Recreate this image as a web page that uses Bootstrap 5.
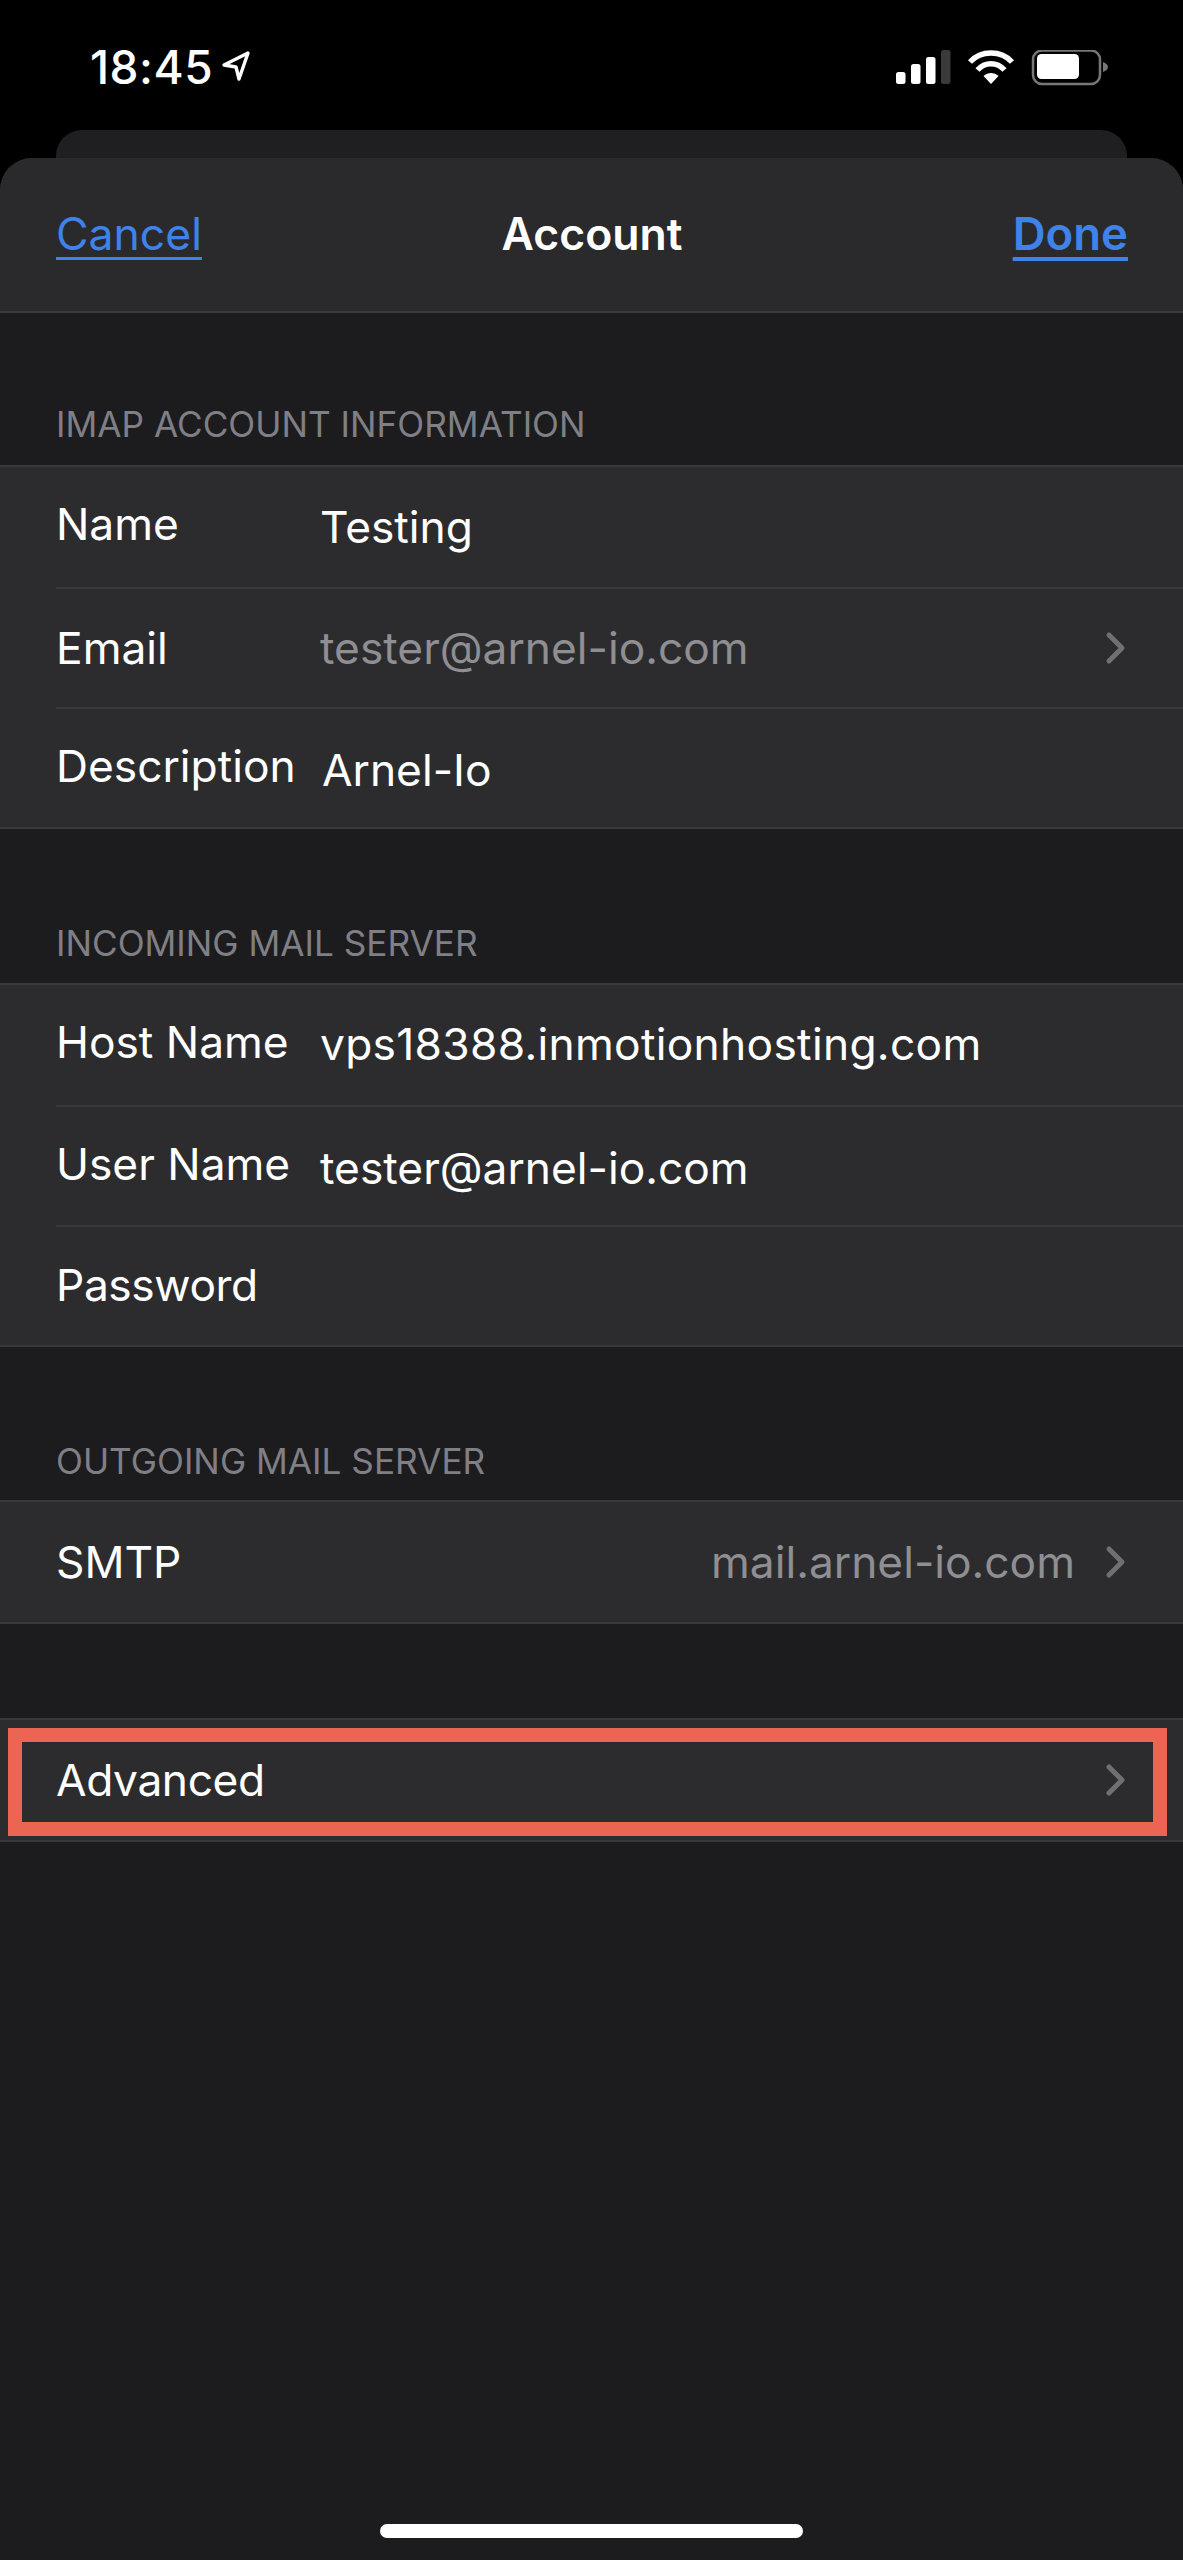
<!DOCTYPE html>
<html>
<head>
  <meta charset="utf-8" />
  <title>Account</title>
  <link href="https://cdn.jsdelivr.net/npm/bootstrap@5.3.2/dist/css/bootstrap.min.css" rel="stylesheet">
  <style>
    body {
      background-color: #000;
      font-family: Inter, "Liberation Sans", sans-serif;
      color: #fff;
    }
    .phone-screen {
      width: 1183px;
      height: 2560px;
      overflow: hidden;
    }
    .status-bar {
      height: 130px;
      padding: 42px 0 0 90px;
    }
    .status-time {
      font-size: 46px;
      line-height: 50px;
      font-weight: 500;
      letter-spacing: 0.5px;
    }
    .status-icons {
      margin-left: auto;
      margin-right: 75px;
      margin-top: 8px;
    }
    .sheet-behind {
      height: 28px;
      margin: 0 56px 0 56px;
      background-color: #1f1f21;
      border-radius: 26px 26px 0 0;
    }
    .sheet {
      height: 2402px;
      background-color: #1c1c1e;
      border-radius: 32px 32px 0 0;
      overflow: hidden;
    }
    .sheet-head {
      height: 155px;
      padding: 0 55px 0 56px;
      background-color: #2a2a2c;
      border-bottom: 2px solid #3a3a3c;
      font-size: 44.5px;
    }
    .sheet-head a {
      color: #3f82ea;
      text-underline-offset: 7px;
      text-decoration-thickness: 3px;
    }
    .head-side { flex: 1 1 0; }
    .head-title { font-weight: 600; }
    .sheet-head a.head-done {
      font-size: 45.5px;
      font-weight: 600;
      text-decoration-thickness: 4px;
    }
    .section-label {
      padding: 0 56px;
      line-height: 50px;
      font-size: 35.2px;
      color: #7f7f85;
    }
    .section-label.first { height: 152px; padding-top: 86px; }
    .section-label.next { height: 153.5px; padding-top: 89px; }
    .cell-group {
      background-color: #2c2c2e;
      border-top: 2px solid #39393b;
      border-bottom: 2px solid #39393b;
    }
    .cell-row {
      height: 120px;
      padding-right: 56px;
      margin-left: 56px;
      font-size: 44.3px;
    }
    .cell-row + .cell-row { border-top: 2px solid #39393b; }
    .cell-label {
      width: 264px;
      flex-shrink: 0;
    }
    /* editable rows sit a little higher than the value next to them */
    .cell-label.edit-label { padding-bottom: 5px; }
    .cell-label.edit-label.low-label { padding-bottom: 3px; }
    .cell-label.tight-label { letter-spacing: -0.4px; }
    .cell-value { color: #fff; }
    .cell-value.muted-value { color: #8e8e93; }
    .cell-value.low-value { padding-top: 5px; }
    .cell-value.shift-value { margin-left: 2px; }
    .cell-value.side-value { margin-left: auto; margin-right: 30px; }
    .cell-value.host-value { letter-spacing: 0.3px; }
    .advanced-wrap { margin-top: 94px; }
    .red-outline {
      position: absolute;
      top: 8px;
      left: 8px;
      right: 16px;
      bottom: 4px;
      border: 14px solid #ec6553;
    }
    .home-bar {
      width: 423px;
      height: 14px;
      margin: auto auto 22px;
      background-color: #fff;
      border-radius: 7px;
    }
  </style>
</head>
<body>
  <div class="phone-screen d-flex flex-column">
    <!-- status bar -->
    <div class="status-bar d-flex align-items-start">
      <span class="status-time">18:45</span>
      <svg class="ms-2 mt-2" width="30" height="32" viewBox="0 0 30 32">
        <path d="M27 3 L3 15 L15 17 L18 29 Z" fill="none" stroke="#fff" stroke-width="3.4" stroke-linejoin="round"/>
      </svg>
      <svg class="status-icons" width="212" height="36" viewBox="0 0 212 36">
        <rect x="0" y="22" width="9.5" height="12" rx="2.5" fill="#fff"/>
        <rect x="15" y="14" width="9.5" height="20" rx="2.5" fill="#fff"/>
        <rect x="30" y="7" width="9.5" height="27" rx="2.5" fill="#fff"/>
        <rect x="45" y="0" width="9.5" height="34" rx="2.5" fill="#3a3a3c"/>
        <path d="M74 12 C85 0 105 0 116 12" fill="none" stroke="#fff" stroke-width="5.5"/>
        <path d="M81.5 20 C89 11.5 101 11.5 108.5 20" fill="none" stroke="#fff" stroke-width="5.5"/>
        <path d="M87.5 26 L95 34 L102.5 26 C98 22 92 22 87.5 26 Z" fill="#fff"/>
        <rect x="137" y="0.5" width="67" height="33.5" rx="9" fill="none" stroke="#77777a" stroke-width="2.5"/>
        <rect x="141" y="4" width="42" height="25" rx="4.5" fill="#fff"/>
        <path d="M207 12 C210 13 212 15 212 17 C212 19 210 21 207 22 Z" fill="#77777a"/>
      </svg>
    </div>

    <div class="sheet-behind"></div>

    <div class="sheet d-flex flex-column">
      <div class="sheet-head d-flex align-items-center">
        <div class="head-side"><a href="#">Cancel</a></div>
        <span class="head-title">Account</span>
        <div class="head-side text-end"><a href="#" class="head-done">Done</a></div>
      </div>

      <div class="section-label first">IMAP ACCOUNT INFORMATION</div>
      <div class="cell-group">
        <div class="cell-row d-flex align-items-center">
          <span class="cell-label edit-label">Name</span>
          <span class="cell-value">Testing</span>
        </div>
        <div class="cell-row d-flex align-items-center">
          <span class="cell-label">Email</span>
          <span class="cell-value muted-value">tester@arnel-io.com</span>
          <svg class="ms-auto" width="22" height="34" viewBox="0 0 22 34">
            <path d="M4 4 L17 17 L4 30" fill="none" stroke="#6f6f74" stroke-width="5" stroke-linecap="round" stroke-linejoin="round"/>
          </svg>
        </div>
        <div class="cell-row d-flex align-items-center">
          <span class="cell-label edit-label low-label">Description</span>
          <span class="cell-value shift-value low-value">Arnel-Io</span>
        </div>
      </div>

      <div class="section-label next">INCOMING MAIL SERVER</div>
      <div class="cell-group">
        <div class="cell-row d-flex align-items-center">
          <span class="cell-label edit-label">Host Name</span>
          <span class="cell-value host-value">vps18388.inmotionhosting.com</span>
        </div>
        <div class="cell-row d-flex align-items-center">
          <span class="cell-label edit-label low-label">User Name</span>
          <span class="cell-value low-value">tester@arnel-io.com</span>
        </div>
        <div class="cell-row d-flex align-items-center">
          <span class="cell-label tight-label">Password</span>
        </div>
      </div>

      <div class="section-label next">OUTGOING MAIL SERVER</div>
      <div class="cell-group">
        <div class="cell-row d-flex align-items-center">
          <span class="cell-label">SMTP</span>
          <span class="cell-value muted-value side-value">mail.arnel-io.com</span>
          <svg width="22" height="34" viewBox="0 0 22 34">
            <path d="M4 4 L17 17 L4 30" fill="none" stroke="#6f6f74" stroke-width="5" stroke-linecap="round" stroke-linejoin="round"/>
          </svg>
        </div>
      </div>

      <div class="cell-group advanced-wrap position-relative">
        <div class="cell-row d-flex align-items-center">
          <span class="cell-label tight-label">Advanced</span>
          <svg class="ms-auto" width="22" height="34" viewBox="0 0 22 34">
            <path d="M4 4 L17 17 L4 30" fill="none" stroke="#6f6f74" stroke-width="5" stroke-linecap="round" stroke-linejoin="round"/>
          </svg>
        </div>
        <div class="red-outline"></div>
      </div>

      <div class="home-bar"></div>
    </div>
  </div>
  <script src="https://cdn.jsdelivr.net/npm/bootstrap@5.3.2/dist/js/bootstrap.bundle.min.js"></script>
</body>
</html>
